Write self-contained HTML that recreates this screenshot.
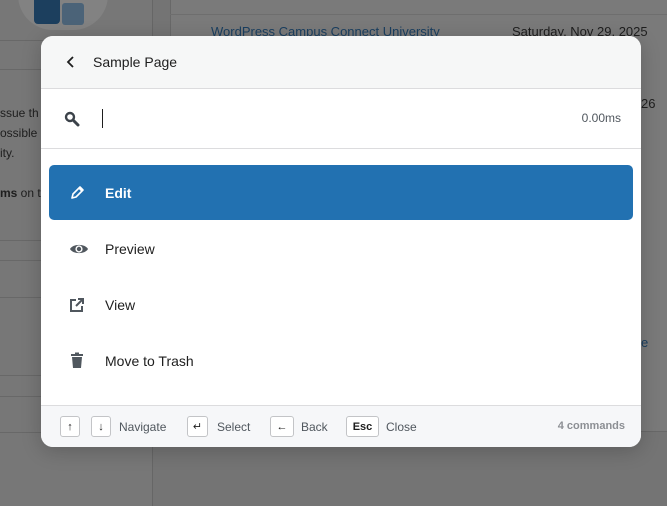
<!DOCTYPE html>
<html><head><style>
*{box-sizing:border-box;margin:0;padding:0}
body{width:667px;height:506px;overflow:hidden;background:#747474;font-family:"Liberation Sans",sans-serif;position:relative}
.abs{position:absolute}
.modal{position:absolute;left:41px;top:36px;width:600px;height:411px;background:#fff;border-radius:12px;overflow:hidden;box-shadow:0 4px 20px rgba(0,0,0,.2)}
.hdr{height:53px;background:#f6f7f7;border-bottom:1px solid #dcdcde;display:flex;align-items:center}
.hdr span{font-size:14px;color:#1e1e1e;margin-left:16px}
.search{height:60px;border-bottom:1px solid #dcdcde;position:relative}
.item{position:absolute;left:8px;width:584px;height:55px;border-radius:5px;display:flex;align-items:center;font-size:14px;color:#1e1e1e}
.item svg{position:absolute;left:20px}
.item span{position:absolute;left:56px}
.foot{position:absolute;left:0;top:369px;width:600px;height:42px;background:#f6f7f9;border-top:1px solid #dcdcde;font-size:12px;color:#50575e}
.k{position:absolute;top:10px;height:21px;border:1px solid #c3c4c7;border-radius:3px;background:#fff;font-size:11px;color:#1e1e1e;display:flex;align-items:center;justify-content:center}
.t{position:absolute;top:14px}
</style></head><body>
<div class="abs" style="left:0;top:0;width:152px;height:506px;background:#777"></div>
<div class="abs" style="left:152px;top:0;width:1px;height:506px;background:#666"></div>
<div class="abs" style="left:18px;top:-40px;width:90px;height:70px;border-radius:40px;background:#828282"></div>
<div class="abs" style="left:34px;top:0;width:26px;height:24px;background:#1c3f5e;border-radius:0 0 4px 4px"></div>
<div class="abs" style="left:62px;top:3px;width:22px;height:22px;background:#4b6378;border-radius:3px"></div>
<div class="abs" style="left:0;top:40px;width:152px;height:1px;background:#686868"></div>
<div class="abs" style="left:0;top:69px;width:152px;height:1px;background:#686868"></div>
<div class="abs" style="left:0;top:103px;font-size:12px;color:#1e1e1e;line-height:20px">ssue th<br>ossible<br>ity.<br><br><b>ms</b> on t</div>
<div class="abs" style="left:0;top:240px;width:152px;height:1px;background:#686868"></div>
<div class="abs" style="left:0;top:260px;width:152px;height:1px;background:#686868"></div>
<div class="abs" style="left:0;top:297px;width:152px;height:1px;background:#686868"></div>
<div class="abs" style="left:0;top:375px;width:152px;height:1px;background:#686868"></div>
<div class="abs" style="left:0;top:396px;width:152px;height:1px;background:#686868"></div>
<div class="abs" style="left:0;top:432px;width:152px;height:1px;background:#686868"></div>
<div class="abs" style="left:170px;top:0;width:497px;height:432px;background:#7a7a7a;border-left:1px solid #686868;border-bottom:1px solid #686868"></div>
<div class="abs" style="left:170px;top:14px;width:497px;height:1px;background:#6e6e6e"></div>
<div class="abs" style="left:211px;top:24px;font-size:13px;color:#1a3f60">WordPress Campus Connect University</div>
<div class="abs" style="left:512px;top:24px;font-size:13px;color:#1e1e1e">Saturday, Nov 29, 2025</div>
<div class="abs" style="left:641px;top:96px;font-size:13px;color:#1e1e1e">26</div>
<div class="abs" style="left:641px;top:335px;font-size:13px;color:#1a3f60">e</div>

<div class="modal">
  <div class="hdr">
    <svg style="margin-left:24px" width="12" height="14" viewBox="0 0 12 14"><path d="M8 2L3 7l5 5" fill="none" stroke="#1e1e1e" stroke-width="1.8"/></svg>
    <span>Sample Page</span>
  </div>
  <div class="search">
    <svg style="position:absolute;left:23px;top:22px" width="16" height="16" viewBox="0 0 16 16"><circle cx="6" cy="6" r="4" fill="none" stroke="#3c434a" stroke-width="2.4"/><path d="M9 9l5 5" stroke="#3c434a" stroke-width="3" stroke-linecap="round"/></svg>
    <div style="position:absolute;left:61px;top:20px;width:1px;height:19px;background:#1e1e1e"></div>
    <div style="position:absolute;right:20px;top:22px;font-size:12px;color:#50575e">0.00ms</div>
  </div>
  <div class="item" style="top:129px;background:#2271b1;color:#fff;font-weight:bold"><svg width="16" height="16" viewBox="0 0 16 16"><path d="M3 13l1-4 7-7 3 3-7 7z M10 3l3 3" fill="none" stroke="#fff" stroke-width="1.6" stroke-linejoin="round"/></svg><span>Edit</span></div>
  <div class="item" style="top:185px"><svg width="20" height="14" viewBox="0 0 20 14"><path d="M1 7C4 1.5 16 1.5 19 7C16 12.5 4 12.5 1 7z" fill="#50575e"/><circle cx="10" cy="7" r="3.6" fill="#fff"/><circle cx="10" cy="7" r="2.2" fill="#50575e"/></svg><span>Preview</span></div>
  <div class="item" style="top:241px"><svg width="16" height="16" viewBox="0 0 16 16"><path d="M7 3H2v11h11V9" fill="none" stroke="#50575e" stroke-width="2"/><path d="M7 9l7-7M9 2h5v5" fill="none" stroke="#50575e" stroke-width="2"/></svg><span>View</span></div>
  <div class="item" style="top:297px"><svg width="16" height="17" viewBox="0 0 16 17"><rect x="2" y="2" width="12" height="2" fill="#50575e"/><rect x="6" y="0.5" width="4" height="2" fill="#50575e"/><path d="M3 5h10l-1 11H4z" fill="#50575e"/></svg><span>Move to Trash</span></div>
  <div class="foot">
    <div class="k" style="left:19px;width:20px">↑</div>
    <div class="k" style="left:50px;width:20px">↓</div>
    <div class="t" style="left:78px">Navigate</div>
    <div class="k" style="left:146px;width:21px">↵</div>
    <div class="t" style="left:176px">Select</div>
    <div class="k" style="left:229px;width:24px">←</div>
    <div class="t" style="left:260px">Back</div>
    <div class="k" style="left:305px;width:33px;font-weight:bold">Esc</div>
    <div class="t" style="left:345px">Close</div>
    <div class="t" style="right:16px;font-size:11px;color:#8c8f94;font-weight:bold">4 commands</div>
  </div>
</div>
</body></html>
